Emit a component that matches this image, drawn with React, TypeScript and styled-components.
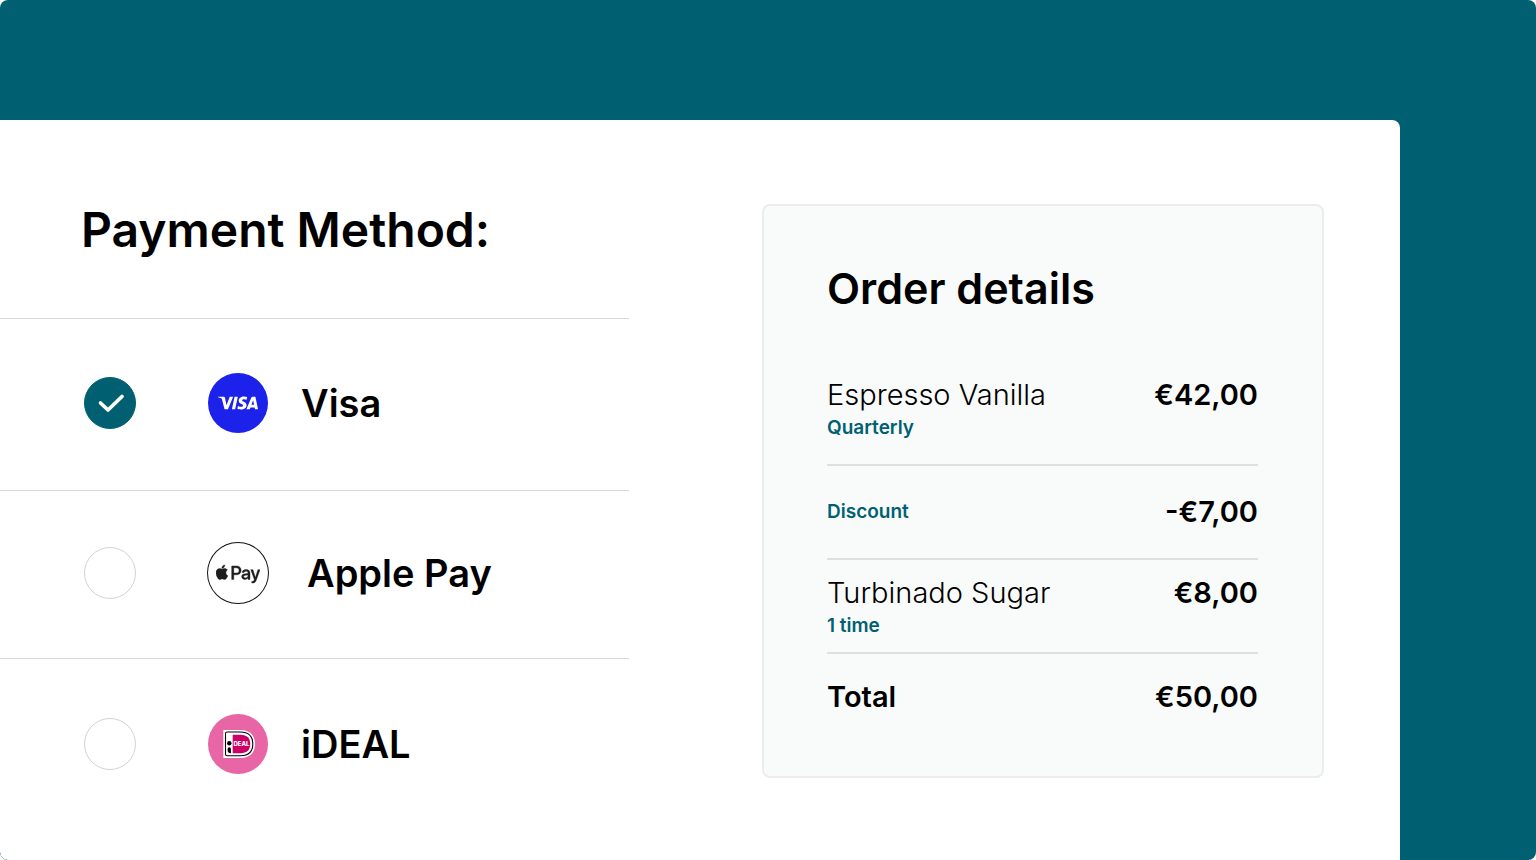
import { useState } from 'react';
import styled, { createGlobalStyle } from 'styled-components';
import { SiVisa } from 'react-icons/si';
import { FaApplePay } from 'react-icons/fa';

const teal = '#006072';

const GlobalStyle = createGlobalStyle`
  *, *::before, *::after { box-sizing: border-box; }
  body {
    margin: 0;
    background: #fff;
    color: #000;
    font-family: Inter, 'Liberation Sans', sans-serif;
  }
`;

const Page = styled.div`
  display: flex;
  min-height: 100vh;
  padding: 120px 136px 0 0;
  background: ${teal};
  border-radius: 8px;
  overflow: hidden;
`;

const Panel = styled.main`
  flex: 1;
  display: flex;
  align-items: flex-start;
  justify-content: space-between;
  gap: 40px;
  padding: 84px 76px 26px 0;
  background: #fff;
  border-radius: 0 8px 0 8px;
`;

const Methods = styled.form`
  flex: 0 1 629px;
`;

const Title = styled.h1`
  margin: 0 0 62px 81px;
  font-size: 48px;
  line-height: 52px;
  font-weight: 600;
`;

const Options = styled.div`
  display: grid;
  grid-template-rows: 172px 168px 174px;
`;

const Option = styled.label`
  display: flex;
  align-items: center;
  padding: 0 0 4px 84px;
  border-top: 1px solid #d9d9d9;
  cursor: pointer;
`;

const Tick = styled.span`
  display: grid;
  margin-right: 72px;

  > * { grid-area: 1 / 1; place-self: center; }
  > svg { pointer-events: none; }
`;

const Radio = styled.input`
  appearance: none;
  width: 52px;
  height: 52px;
  margin: 0;
  border: 1px solid #d3d3d3;
  border-radius: 50%;
  background: #fff;

  &:checked { border-color: ${teal}; background: ${teal}; }
`;

const Logo = styled.span<{ $fill: string; $outlined?: boolean }>`
  display: grid;
  place-items: center;
  width: 60px;
  height: 60px;
  border-radius: 50%;
  background: ${(p) => p.$fill};
  color: ${(p) => (p.$outlined ? '#1d1d1b' : '#fff')};
  box-shadow: ${(p) => (p.$outlined ? '0 0 0 1px #111' : 'none')};
`;

const ApplePayMark = styled(FaApplePay)`
  width: 44px;
  height: 36px;
  margin-top: 2px;
  stroke: currentColor;
  stroke-width: 6px;
`;

const Name = styled.span<{ $gap: number }>`
  margin-left: ${(p) => p.$gap}px;
  font-size: 38px;
  line-height: 48px;
  font-weight: 600;
`;

const Card = styled.section`
  flex: 0 1 562px;
  padding: 56px 64px 61px 63px;
  border: 2px solid #ebeded;
  border-radius: 8px;
  background: #f9fbfa;
`;

const CardTitle = styled.h2`
  margin: 0 0 63px;
  font-size: 43px;
  line-height: 52px;
  font-weight: 600;
`;

const Lines = styled.table`
  width: 100%;
  border-spacing: 0;
  font-size: 29px;
  line-height: 36px;
`;

const Line = styled.tr<{ $top: number; $bottom: number }>`
  th, td {
    padding: ${(p) => p.$top}px 0 ${(p) => p.$bottom}px;
    border-bottom: 2px solid #dde0df;
    vertical-align: top;
  }
  &:last-child th, &:last-child td { border-bottom: 0; }
`;

const Item = styled.th<{ $strong?: boolean }>`
  text-align: left;
  font-weight: ${(p) => (p.$strong ? 600 : 300)};
`;

const Amount = styled.td`
  text-align: right;
  font-weight: 600;
`;

const Note = styled.span<{ $tall?: boolean }>`
  display: block;
  color: ${teal};
  font-size: 19px;
  line-height: ${(p) => (p.$tall ? 36 : 30)}px;
  font-weight: 600;
`;

const CheckMark = () => (
  <svg width="30" height="22" viewBox="0 0 30 22" fill="none" aria-hidden="true">
    <path d="M5.500 11 13 18 27 4.500" stroke="#fff" strokeWidth="3.700" strokeLinecap="round" strokeLinejoin="round" />
  </svg>
);

const IdealMark = () => (
  <svg width="36" height="30" viewBox="0 0 36 30" aria-hidden="true">
    <path d="M3.300 1h17.200C30 1 35 6.500 35 15S30 29 20.500 29H3.300z" fill="#fff" />
    <path d="M7 3h13C28.500 3 32.800 7.500 32.800 15S28.500 26.700 20.500 26.700H7q-1.500 0-1.500-1.500V4.500Q5.500 3 7 3z" fill="#fff" stroke="#000" strokeWidth="1.100" />
    <path d="M12.700 5.800h7.800c6.700 0 9.700 3.500 9.700 9.200s-3 9.200-9.700 9.200h-7.800z" fill="#cc0066" />
    <circle cx="9.300" cy="14.300" r="2.200" fill="#000" />
    <path d="M9.300 18.300q1.600 0 1.600 1.600v4.300q-3.300 0-3.300-3v-1.300q0-1.600 1.700-1.600z" fill="#000" />
    <text x="13.500" y="17" fill="#fff" fontFamily="Inter, sans-serif" fontSize="6" fontWeight="800">DEAL</text>
  </svg>
);

const methods = [
  { id: 'visa', name: 'Visa', fill: '#1c22ea', gap: 33, mark: <SiVisa size={40} aria-hidden /> },
  { id: 'apple', name: 'Apple Pay', fill: '#fff', outlined: true, gap: 39, mark: <ApplePayMark aria-hidden /> },
  { id: 'ideal', name: 'iDEAL', fill: '#e865a6', gap: 33, mark: <IdealMark /> },
];

export default function App() {
  const [selected, setSelected] = useState('visa');

  return (
    <>
      <GlobalStyle />
      <Page>
        <Panel>
          <Methods>
            <Title id="method-title">Payment Method:</Title>
            <Options role="radiogroup" aria-labelledby="method-title">
              {methods.map((m) => (
                <Option key={m.id}>
                  <Tick>
                    <Radio
                      type="radio"
                      name="method"
                      value={m.id}
                      checked={selected === m.id}
                      onChange={() => setSelected(m.id)}
                    />
                    {selected === m.id && <CheckMark />}
                  </Tick>
                  <Logo $fill={m.fill} $outlined={m.outlined}>{m.mark}</Logo>
                  <Name $gap={m.gap}>{m.name}</Name>
                </Option>
              ))}
            </Options>
          </Methods>
          <Card>
            <CardTitle>Order details</CardTitle>
            <Lines>
              <tbody>
                <Line $top={0} $bottom={21}>
                  <Item scope="row">Espresso Vanilla<Note>Quarterly</Note></Item>
                  <Amount>€42,00</Amount>
                </Line>
                <Line $top={28} $bottom={28}>
                  <Item scope="row"><Note $tall>Discount</Note></Item>
                  <Amount>-€7,00</Amount>
                </Line>
                <Line $top={15} $bottom={11}>
                  <Item scope="row">Turbinado Sugar<Note>1 time</Note></Item>
                  <Amount>€8,00</Amount>
                </Line>
                <Line $top={25} $bottom={0}>
                  <Item scope="row" $strong>Total</Item>
                  <Amount>€50,00</Amount>
                </Line>
              </tbody>
            </Lines>
          </Card>
        </Panel>
      </Page>
    </>
  );
}
